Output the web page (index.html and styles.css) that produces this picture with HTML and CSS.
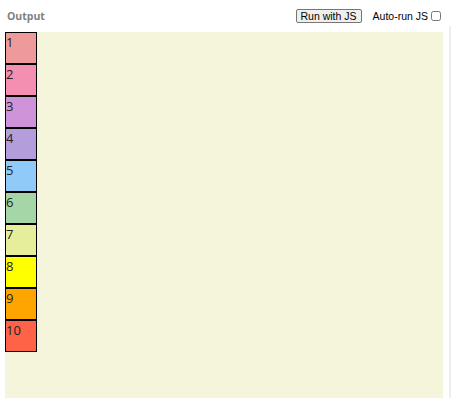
FILE: index.html
```html
<!DOCTYPE html>
<html lang="en">
<head>
    <meta charset="UTF-8">
    <title>Output</title>
    <link rel="stylesheet" href="styles.css">
</head>
<body>
    <div class="page">
        <div class="main">
            <div class="toolbar">
                <span class="label">Output</span>
                <div class="controls">
                    <button class="run">Run with JS</button>
                    <label class="auto">Auto-run JS <input type="checkbox"></label>
                </div>
            </div>
            <div class="output">
                <div class="box c1">1</div>
                <div class="box c2">2</div>
                <div class="box c3">3</div>
                <div class="box c4">4</div>
                <div class="box c5">5</div>
                <div class="box c6">6</div>
                <div class="box c7">7</div>
                <div class="box c8">8</div>
                <div class="box c9">9</div>
                <div class="box c10">10</div>
            </div>
        </div>
        <div class="rail"></div>
    </div>
</body>
</html>
```

FILE: styles.css
```css
html, body {
    margin: 0;
    height: 100%;
    overflow: hidden;
}
body {
    font-family: "Open Sans", "Liberation Sans", sans-serif;
    background: #fff;
}
.page {
    display: flex;
    height: 100%;
}
.main {
    width: 443px;
    display: flex;
    flex-direction: column;
}
.toolbar {
    height: 32px;
    display: flex;
    align-items: center;
    justify-content: space-between;
    padding: 0 0 0 7px;
    box-sizing: border-box;
}
.label {
    font-size: 10.5px;
    font-weight: bold;
    color: #808080;
}
.controls {
    display: flex;
    align-items: center;
    margin-right: 2px;
}
.run {
    font-family: "Liberation Sans", Arial, sans-serif;
    font-size: 10.5px;
    line-height: 11px;
    height: 14px;
    padding: 0 4px;
    margin: 0 11px 0 0;
    border: 1px solid #767676;
    border-radius: 2px;
    background: #efefef;
    color: #000;
}
.auto {
    font-family: "Liberation Sans", Arial, sans-serif;
    font-size: 10.5px;
    color: #000;
    display: flex;
    align-items: center;
}
.auto input {
    width: 10px;
    height: 10px;
    margin: 0 0 0 3px;
}
.output {
    flex: 1;
    margin-left: 5px;
    background: #f5f5dc;
}
.box {
    width: 30px;
    height: 30px;
    border: 1px solid #000;
    font-size: 13px;
    line-height: 18px;
    color: #222;
}
.c1 { background: #ef9a9a; }
.c2 { background: #f48fb1; }
.c3 { background: #ce93d8; }
.c4 { background: #b39ddb; }
.c5 { background: #90caf9; }
.c6 { background: #a5d6a7; }
.c7 { background: #e6ee9c; }
.c8 { background: #ffff00; }
.c9 { background: #ffa500; }
.c10 { background: #ff6347; }
.rail {
    width: 2px;
    margin: 26px 0 0 6px;
    background: #ededed;
}
```
